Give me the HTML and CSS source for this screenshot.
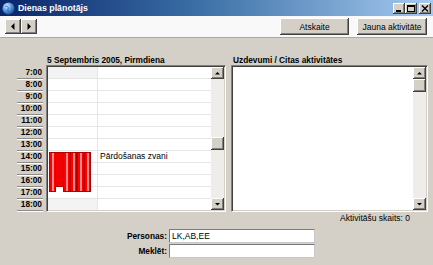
FILE: index.html
```html
<!DOCTYPE html>
<html lang="lv">
<head>
<meta charset="utf-8">
<title>Dienas plānotājs</title>
<link rel="stylesheet" href="styles.css">
</head>
<body>
<div class="win">
  <div class="titlebar">
    <svg class="appicon" viewBox="0 0 13 13">
      <defs>
        <radialGradient id="g" cx="0.35" cy="0.3" r="0.8">
          <stop offset="0" stop-color="#d8ecff"/>
          <stop offset="0.45" stop-color="#5a9ee0"/>
          <stop offset="1" stop-color="#123f8c"/>
        </radialGradient>
      </defs>
      <circle cx="6.5" cy="6.5" r="6" fill="url(#g)"/>
      <path d="M3 4.5 C5 3.5 7 5 6 7 C5 8.5 6.5 10 8.5 10" fill="none" stroke="#2a6fc0" stroke-width="1"/>
    </svg>
    <span class="title">Dienas plānotājs</span>
    <div class="wbtns">
      <span class="wbtn"><svg viewBox="0 0 12 11" class="wg"><rect x="3" y="7" width="5" height="2" fill="#000"/></svg></span>
      <span class="wbtn"><svg viewBox="0 0 12 11" class="wg"><rect x="2.5" y="2.5" width="7" height="6" fill="none" stroke="#000" stroke-width="1"/><rect x="2" y="2" width="8" height="2" fill="#000"/></svg></span>
      <span class="wbtn close"><svg viewBox="0 0 12 11" class="wg"><path d="M3 2.5 L9 8.5 M9 2.5 L3 8.5" stroke="#000" stroke-width="1.4"/></svg></span>
    </div>
  </div>

  <div class="toolbar">
    <div class="nav">
      <span class="navbtn"><svg viewBox="0 0 16 15" class="ng"><path d="M9.5 4 L9.5 11 L6 7.5 Z" fill="#000"/></svg></span>
      <span class="navbtn"><svg viewBox="0 0 16 15" class="ng"><path d="M6.5 4 L6.5 11 L10 7.5 Z" fill="#000"/></svg></span>
    </div>
    <div class="tbtns">
      <span class="btn">Atskaite</span>
      <span class="btn">Jauna aktivitāte</span>
    </div>
  </div>

  <div class="main">
    <div class="panels">
      <section class="day">
        <div class="hdr day-hdr">5 Septembris 2005, Pirmdiena</div>
        <div class="daybody">
          <div class="times">
            <div class="tl">7:00</div>
            <div class="tl">8:00</div>
            <div class="tl">9:00</div>
            <div class="tl">10:00</div>
            <div class="tl">11:00</div>
            <div class="tl">12:00</div>
            <div class="tl">13:00</div>
            <div class="tl">14:00</div>
            <div class="tl">15:00</div>
            <div class="tl">16:00</div>
            <div class="tl">17:00</div>
            <div class="tl">18:00</div>
          </div>
          <div class="sunken dgrid">
            <div class="cells">
              <div class="c1 off"></div><div class="c2"></div>
              <div class="c1"></div><div class="c2"></div>
              <div class="c1"></div><div class="c2"></div>
              <div class="c1"></div><div class="c2"></div>
              <div class="c1"></div><div class="c2"></div>
              <div class="c1"></div><div class="c2"></div>
              <div class="c1"></div><div class="c2"></div>
              <div class="c1"></div><div class="c2 evtext">Pārdošanas zvani</div>
              <div class="c1"></div><div class="c2"></div>
              <div class="c1"></div><div class="c2"></div>
              <div class="c1"></div><div class="c2"></div>
              <div class="c1 off"></div><div class="c2"></div>
              <div class="event">
                <span class="seg"></span>
                <span class="seg short plain"></span>
                <span class="seg"></span>
                <span class="seg"></span>
                <span class="seg"></span>
                <span class="seg"></span>
              </div>
            </div>
            <div class="vscroll">
              <span class="sbtn"><svg viewBox="0 0 13 12" class="sg"><path d="M4 7.5 L9 7.5 L6.5 5 Z" fill="#000"/></svg></span>
              <div class="track"><span class="thumb thumb-day"></span></div>
              <span class="sbtn"><svg viewBox="0 0 13 12" class="sg"><path d="M4 5 L9 5 L6.5 7.5 Z" fill="#000"/></svg></span>
            </div>
          </div>
        </div>
      </section>

      <section class="tasks">
        <div class="hdr task-hdr">Uzdevumi / Citas aktivitātes</div>
        <div class="sunken tlist">
          <div class="listarea"></div>
          <div class="vscroll">
            <span class="sbtn"><svg viewBox="0 0 13 12" class="sg"><path d="M4 7.5 L9 7.5 L6.5 5 Z" fill="#000"/></svg></span>
            <div class="track"><span class="thumb"></span></div>
            <span class="sbtn"><svg viewBox="0 0 13 12" class="sg"><path d="M4 5 L9 5 L6.5 7.5 Z" fill="#000"/></svg></span>
          </div>
        </div>
      </section>
    </div>

    <div class="count">Aktivitāšu skaits: 0</div>

    <div class="form">
      <label class="lbl">Personas:</label>
      <div class="input">LK,AB,EE</div>
      <label class="lbl">Meklēt:</label>
      <div class="input"></div>
    </div>
  </div>
</div>
</body>
</html>
```

FILE: styles.css
```css
* { box-sizing: border-box; margin: 0; padding: 0; }
html, body { width: 433px; height: 265px; overflow: hidden; }
body {
  background: #D4D0C8;
  font-family: "Liberation Sans", Arial, sans-serif;
  font-size: 8.5px;
  color: #000;
}
.win { width: 433px; height: 265px; display: flex; flex-direction: column; }

/* title bar */
.titlebar {
  height: 16px;
  flex: none;
  display: flex;
  align-items: center;
  padding: 0 2px 0 2px;
  background: linear-gradient(to right, #0A246A 0%, #3A6EA5 45%, #A6CAF0 100%);
}
.appicon { width: 13px; height: 13px; margin-right: 3px; }
.title { color: #fff; font-weight: bold; font-size: 8.8px; flex: 1; line-height: 16px; }
.wbtns { display: flex; }
.wbtn {
  width: 12px; height: 11px;
  background: #D4D0C8;
  box-shadow: inset -1px -1px #404040, inset 1px 1px #fff, inset -2px -2px #808080;
  display: flex;
}
.wbtn.close { margin-left: 2px; }
.wg { width: 12px; height: 11px; }

/* toolbar */
.toolbar {
  height: 22px;
  flex: none;
  background: #F9F9F9;
  border-bottom: 1px solid #A8A8A8;
  display: flex;
  align-items: center;
  justify-content: space-between;
  padding: 0 6px 0 5px;
}
.nav { display: flex; }
.navbtn {
  width: 16px; height: 15px;
  background: #D4D0C8;
  box-shadow: inset -1px -1px #404040, inset 1px 1px #fff, inset -2px -2px #808080;
  display: flex;
}
.ng { width: 16px; height: 15px; }
.tbtns { display: flex; gap: 8px; }
.btn {
  width: 69px; height: 17px;
  background: #D4D0C8;
  box-shadow: inset -1px -1px #404040, inset 1px 1px #fff, inset -2px -2px #808080;
  display: flex; align-items: center; justify-content: center;
  white-space: nowrap;
}
.btn + .btn { width: 70px; }

/* main */
.main { flex: 1; padding: 17px 5px 0 17px; }
.panels { display: flex; gap: 5px; }
.hdr { font-weight: bold; font-size: 8.3px; height: 10px; line-height: 10px; white-space: nowrap; }
.day { width: 209px; }
.day-hdr { margin-left: 30px; }
.task-hdr { margin-left: 2px; }
.daybody { display: flex; gap: 3px; }
.times { width: 26px; padding-top: 2px; }
.tl {
  height: 12px;
  line-height: 11px;
  font-weight: bold;
  font-size: 8.3px;
  text-align: right;
  padding-right: 1px;
  border-bottom: 1px solid #8C8C8C;
  box-shadow: 0 1px 0 #fff;
}

.sunken {
  border: 1px solid;
  border-color: #808080 #fff #fff #808080;
  padding: 1px;
  box-shadow: inset 1px 1px #404040, inset -1px -1px #D4D0C8;
  background: #fff;
  display: flex;
}
.dgrid { width: 180px; height: 147px; }
.cells {
  flex: 1;
  display: grid;
  grid-template-columns: 50px 1fr;
  grid-auto-rows: 12px;
  position: relative;
  background: #fff;
  overflow: hidden;
}
.c1, .c2 { border-bottom: 1px solid #E6E6E6; }
.c1 { border-right: 1px solid #E6E6E6; }
.c1.off { background: #F3F3F3; }
.evtext { padding-left: 2px; line-height: 11px; white-space: nowrap; }

.event {
  position: absolute;
  left: 1px; top: 85px;
  width: 42px; height: 40px;
  display: flex;
  align-items: flex-start;
}
.seg {
  width: 7px; height: 40px;
  background: linear-gradient(to right, #C00000 0, #C00000 1px, #FF0000 1px, #FF0000 3px, #FF8C8C 3px, #FF8C8C 5px, #FF0000 5px, #FF0000 6px, #B00000 6px);
  border-top: 1px solid #B00000;
  border-bottom: 1px solid #B00000;
}
.seg.plain { background: #F00000; }
.seg.short { height: 35px; }

/* scrollbars */
.vscroll { width: 13px; display: flex; flex-direction: column; background: #EFEEEA; }
.sbtn {
  width: 13px; height: 12px; flex: none;
  background: #D4D0C8;
  box-shadow: inset -1px -1px #404040, inset 1px 1px #fff, inset -2px -2px #808080;
  display: flex;
}
.sg { width: 13px; height: 12px; }
.track {
  flex: 1;
  background: #EEEDE9;
  display: flex; flex-direction: column;
}
.thumb {
  width: 13px; height: 13px;
  background: #D4D0C8;
  box-shadow: inset -1px -1px #404040, inset 1px 1px #fff, inset -2px -2px #808080;
}
.thumb-day { margin-top: 58px; }

.tasks { width: 197px; }
.tlist { width: 197px; height: 147px; }
.listarea { flex: 1; background: #fff; }

.count { height: 10px; line-height: 10px; text-align: right; padding-right: 18px; margin-top: 1px; }

.form {
  margin-top: 6px;
  display: grid;
  grid-template-columns: 150px 146px;
  grid-auto-rows: 14px;
  column-gap: 2px;
  row-gap: 1px;
}
.lbl { font-weight: bold; font-size: 8.3px; text-align: right; line-height: 14px; }
.input {
  background: #fff;
  border: 1px solid;
  border-color: #7A7A7A #C8C8C8 #C8C8C8 #7A7A7A;
  padding-left: 2px;
  line-height: 12px;
}
```
